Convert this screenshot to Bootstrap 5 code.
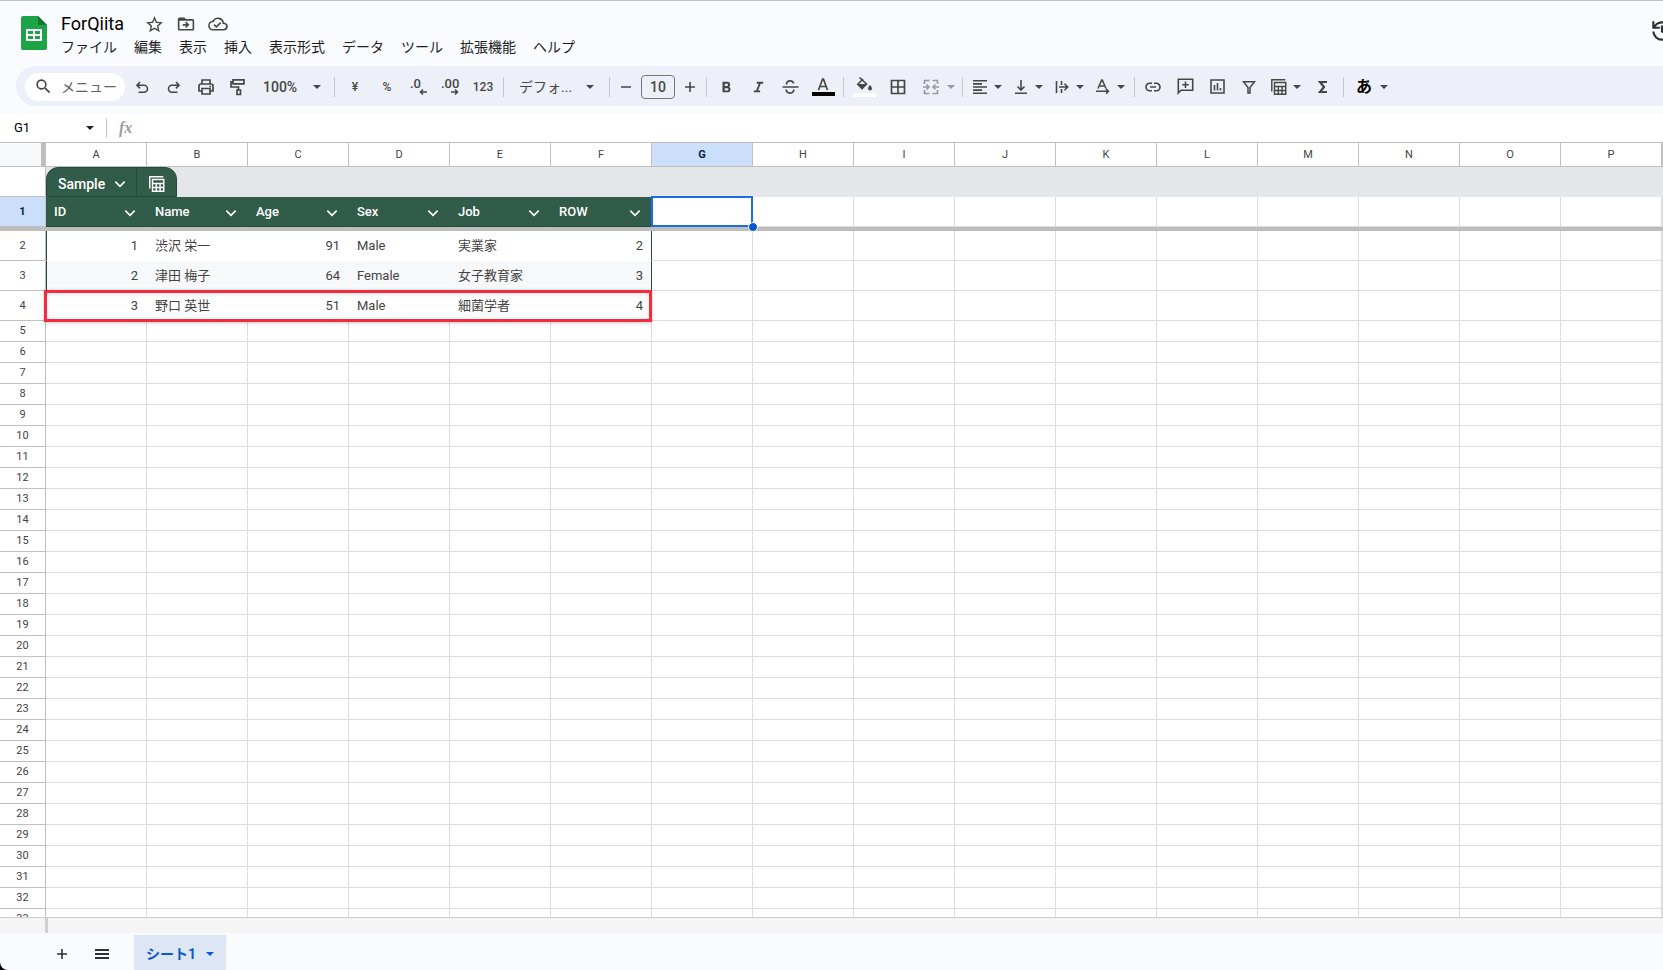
<!DOCTYPE html>
<html lang="ja">
<head>
<meta charset="utf-8">
<meta name="viewport" content="width=device-width, initial-scale=1">
<title>ForQiita</title>
<link href="https://cdn.jsdelivr.net/npm/bootstrap@5.3.0/dist/css/bootstrap.min.css" rel="stylesheet">
<style>
:root{--ink:#444746;--line:#dcdcdc;--head-line:#c0c0c0;--freeze:#bdbdbd;--green:#315c4a;--green-dark:#244a39;--blue:#0b57d0}
html{background:#000}
body{background:transparent;font-family:Roboto,"Noto Sans CJK JP",sans-serif;font-size:14px;line-height:20px;color:#1f1f1f}
button{background:none;border:0;padding:0;color:inherit}
svg{display:block;fill:currentColor;flex:none}
.app{background:#f9fbff;border-top:1px solid #c0c0c0;border-bottom-left-radius:8px}
.app-head{height:65px;padding:11px 0 0 21px;gap:14px}
.doc-title{font-size:18px;line-height:24px;color:#000;width:80px;border:0;padding:0;background:none}
.menus{gap:17px;padding-top:1px}
.menus a{color:#1f1f1f;text-decoration:none}
.head-icons{gap:12px;color:var(--ink)}
.history{margin-right:-12px;height:38px;color:#303030}
.tools{height:40px;margin-left:16px;padding:1px 0 0 9px;background:#edf0f8;border-radius:20px 0 0 20px;color:var(--ink)}
.search-pill{width:100px;height:28px;border-radius:14px;background:#fff;padding-left:9px;gap:8px;margin-right:1px}
.search-pill input{width:60px;border:0;padding:0;background:none;outline:0}
.search-pill input::placeholder{color:#5f6368;opacity:1}
.tool{width:32px;height:28px;display:flex;align-items:center;justify-content:center;flex:none}
.tool.slim{width:24px}
.split{width:1px;height:20px;margin:0 4px;background:#c4c7cc;flex:none}
.split.tight{margin-right:2px}
.drop{height:28px;display:flex;align-items:center;flex:none;padding-left:1px;width:40px}
.drop .glyph{width:24px;display:flex;justify-content:center}
.drop.wide{width:44px;padding-left:5px;gap:2px}
.drop.kana{width:46px;padding-left:4px;gap:2px;color:#000}
.drop.kana .tri{color:var(--ink)}
.drop.tbl{width:42px;padding-left:2px}
.drop.zoom{width:76px;padding:0 7px 0 9px;justify-content:space-between}
.drop.face{width:97px;padding:0 9px 0 11px;justify-content:space-between}
.tri{width:12px;display:flex;justify-content:center;flex:none}
.tri::before{content:"";border:4px solid transparent;border-top-color:currentColor;border-bottom:0}
.num-fmt{font-size:14px;font-weight:500}
.small-fmt{font-size:12px;font-weight:500}
.size-box{width:34px;height:24px;margin:0 3px;border:1px solid #747775;border-radius:4px;background:none;text-align:center;padding:0;color:var(--ink);font-weight:500}
.swatch{display:flex;flex-direction:column;align-items:center;gap:1px}
.swatch i{width:23px;height:4px}
.formula{height:28px;margin-top:8px;background:#fff}
.formula .cell-name{width:70px;border:0;padding:0;margin-left:14px;font-size:13px;color:#000}
.formula input:last-child{border:0;outline:0}
.fx{font:italic bold 16px/20px "Liberation Serif",serif;color:#9a9da1}
.sheet{flex:1 1 0;overflow:hidden;background:#fff;border-top:1px solid var(--head-line);border-bottom:1px solid #ccc;min-height:0}
.grid{table-layout:fixed;width:100%;border-collapse:separate;border-spacing:0;font-size:13px;color:#434343}
.grid th,.grid td{padding:0;height:21px;line-height:20px;border-right:1px solid var(--line);border-bottom:1px solid var(--line);font-weight:400;white-space:nowrap}
.grid .c-head{width:46px}.grid .c-data{width:101px}
.grid thead th{height:24px;line-height:23px;font-size:11px;text-align:center;border-color:var(--head-line)}
.grid tbody th{font-size:11px;text-align:center;border-color:var(--head-line)}
.grid .corner{background:#f8f9fa;box-shadow:inset -4px 0 var(--freeze)}
.grid .on{background:#cbdffb;font-weight:700!important;color:#041e49}
.grid .tall th,.grid .tall td{height:30px}
.grid .tall td{padding:0 8px}
.grid .banner td{background:#e5e6ea;border:0;padding:0;vertical-align:top}
.tabset{width:131px;height:30px;background:var(--green);color:#fff;border-radius:12px 12px 0 0;border:1px solid var(--green-dark)}
.tabset button:first-child{width:90px;padding:3px 9px 0 11px;border-right:1px solid var(--green-dark);font-weight:500;font-size:14px}
.tabset button:last-child{width:39px;padding-top:3px}
.grid .titles td.h{background:var(--green);border-color:var(--green);border-bottom-color:var(--green-dark);color:#fff;font-weight:500;padding-right:9px}
.grid .rec td.f{border-color:transparent}
.grid .rec td.n{text-align:right}
.grid .rec td.first{border-left:1px solid var(--green-dark)}
.grid .rec td.last{border-right:1px solid var(--green-dark)}
.grid .band td.f{background:#f6f8f9}
.grid .freeze td{height:4px;line-height:0;background:var(--freeze);border:0}
.picked,.flagged{position:relative}
.picked::before{content:"";position:absolute;left:-1px;top:-1px;right:-1px;bottom:-1px;border:2px solid #1a6ee0;z-index:2}
.picked::after{content:"";position:absolute;right:-6px;bottom:-6px;width:10px;height:10px;border-radius:50%;background:var(--blue);border:1px solid #fff;z-index:3}
.flagged::after{content:"";position:absolute;left:-3px;top:-1px;width:608px;height:32px;border:3px solid #f52b3d;box-shadow:0 1px 4px #0003,inset 0 1px 4px #0002;z-index:2}
.scroll-lane{height:15px;background:#f5f5f5;padding-left:45px}
.scroll-lane i{width:3px;background:#d0d0d0}
.foot{height:37px;padding:2px 0 0 46px;color:#303030}
.foot .sheet-tab{width:92px;background:#dde6f5;color:var(--blue);font-weight:700;padding:2px 0 0 12px;gap:8px;margin-left:16px}
.foot .tool{padding-top:2px}
</style>
</head>
<body>
<svg class="d-none">
  <symbol id="chev" viewBox="0 0 12 12"><path d="M2 4l4 4 4-4" fill="none" stroke="currentColor" stroke-width="1.400"/></symbol>
  <symbol id="tcalc" viewBox="0 0 20 20"><path d="M2 15V2h15M5 5h12.500v13H5zM5 9.500h12.500M5 13.800h12.500M9.200 9.500V18M13.400 9.500V18" fill="none" stroke="currentColor" stroke-width="1.600"/></symbol>
</svg>
<div class="app d-flex flex-column vh-100 overflow-hidden">
  <header class="app-head d-flex flex-shrink-0">
    <svg width="26" height="34" viewBox="0 0 26 34" class="mt-1"><path fill="#1ca446" d="M2 0H17l9 9v23a2 2 0 0 1-2 2H2a2 2 0 0 1-2-2V2a2 2 0 0 1 2-2z"/><path fill="#0f7a34" d="M17 0l9 9h-9z"/><path fill="#fff" d="M5 13h16v12H5zM7 15v3h5v-3zm7 0v3h5v-3zM7 20v3h5v-3zm7 0v3h5v-3z" fill-rule="evenodd"/></svg>
    <div>
      <div class="d-flex align-items-center">
        <input class="doc-title" aria-label="タイトル" value="ForQiita">
        <div class="head-icons d-flex ms-1">
          <button aria-label="スター"><svg width="19" height="17" viewBox="1 2 22 20"><path d="M22 9.240l-7.190-.62L12 2 9.190 8.630 2 9.240l5.460 4.730L5.820 21 12 17.270 18.180 21l-1.630-7.030zM12 15.400l-3.760 2.270 1-4.280-3.320-2.880 4.380-.38L12 6.100l1.710 4.040 4.380.38-3.320 2.880 1 4.280z"/></svg></button>
          <button aria-label="移動"><svg width="20" height="18" viewBox="0 0 24 22"><path d="M20 5h-8l-2-2H4a2 2 0 0 0-2 2v12c0 1.100.9 2 2 2h16a2 2 0 0 0 2-2V7a2 2 0 0 0-2-2zm0 12H4V7h16zM12.200 16l4-4-4-4-1.300 1.300L12.500 11H8v2h4.500l-1.600 1.700z"/></svg></button>
          <button aria-label="保存済み"><svg width="20" height="18" viewBox="0 1 24 22"><path d="M19.350 10.040A7.490 7.490 0 0 0 12 4C9.110 4 6.600 5.640 5.350 8.040A5.990 5.990 0 0 0 0 14c0 3.310 2.690 6 6 6h13c2.760 0 5-2.240 5-5 0-2.640-2.050-4.780-4.650-4.960zM19 18H6a4 4 0 0 1-.4-8l1.070-.11.500-.95a5.500 5.500 0 0 1 10.220 1.490l.3 1.500 1.530.11A3 3 0 0 1 19 18zm-9-3.800-2.100-2.100-1.400 1.400L10 17l6-6-1.400-1.400z"/></svg></button>
        </div>
      </div>
      <nav class="menus d-flex"><a href="#">ファイル</a><a href="#">編集</a><a href="#">表示</a><a href="#">挿入</a><a href="#">表示形式</a><a href="#">データ</a><a href="#">ツール</a><a href="#">拡張機能</a><a href="#">ヘルプ</a></nav>
    </div>
    <button class="history ms-auto" aria-label="変更履歴"><svg width="26" height="26" viewBox="0 0 24 24"><path d="M12 3a9 9 0 0 0-7 3.400V3H3v7h7V8H6.200A7 7 0 0 1 12 5a7 7 0 1 1-7 7.500H3A9 9 0 1 0 12 3zm-1 4v6l5 3 1-1.600-4-2.400V7z"/></svg></button>
  </header>

  <div class="tools d-flex align-items-center flex-shrink-0">
    <label class="search-pill d-flex align-items-center flex-shrink-0"><svg width="19" height="19" viewBox="0 0 24 24"><path d="M15.500 14h-.8l-.3-.3A6.500 6.500 0 1 0 13.700 14.400l.3.300v.8l5 5 1.500-1.500zm-6 0a4.500 4.500 0 1 1 0-9 4.500 4.500 0 0 1 0 9z"/></svg><input placeholder="メニュー" aria-label="メニュー"></label>
    <button class="tool" aria-label="元に戻す"><svg width="16" height="16" viewBox="0 0 16 16"><path d="M6 3 3 6.200 6 9.400M3 6.200h7a3.500 3.500 0 0 1 0 7H4.500" fill="none" stroke="currentColor" stroke-width="1.600"/></svg></button>
    <button class="tool" aria-label="やり直し"><svg width="16" height="16" viewBox="0 0 16 16"><path d="m10 3 3 3.200-3 3.200M13 6.200H6a3.500 3.500 0 0 0 0 7h5.500" fill="none" stroke="currentColor" stroke-width="1.600"/></svg></button>
    <button class="tool" aria-label="印刷"><svg width="18" height="18" viewBox="0 0 18 18"><path d="M5 5.500V2h8v3.500M5 13H2V8a2 2 0 0 1 2-2h10a2 2 0 0 1 2 2v5h-3M5 10.500h8V16H5z" fill="none" stroke="currentColor" stroke-width="1.700"/><circle cx="13.200" cy="8.500" r=".9"/></svg></button>
    <button class="tool" aria-label="書式を貼り付け"><svg width="18" height="18" viewBox="0 0 18 18"><path d="M4 1.800h11v4H4zM4 3.800H2V9h7.500v3M8 12h3.500v4.500H8z" fill="none" stroke="currentColor" stroke-width="1.700"/></svg></button>
    <button class="drop zoom"><span class="num-fmt">100%</span><span class="tri"></span></button>
    <span class="split"></span>
    <button class="tool small-fmt">¥</button>
    <button class="tool small-fmt">%</button>
    <button class="tool num-fmt" aria-label="小数点以下の桁数を減らす"><svg width="18" height="20" viewBox="0 0 18 20"><text x="0" y="11" font-size="13">.0</text><path d="M17 15h-6M13 12.500 10.500 15l2.500 2.500" fill="none" stroke="currentColor" stroke-width="1.600"/></svg></button>
    <button class="tool num-fmt" aria-label="小数点以下の桁数を増やす"><svg width="18" height="20" viewBox="0 0 18 20"><text x="-1" y="11" font-size="13">.00</text><path d="M9 15h6M13 12.500l2.500 2.500-2.500 2.500" fill="none" stroke="currentColor" stroke-width="1.600"/></svg></button>
    <button class="tool small-fmt">123</button>
    <span class="split"></span>
    <button class="drop face"><span>デフォ...</span><span class="tri"></span></button>
    <span class="split"></span>
    <button class="tool slim" aria-label="縮小"><svg width="12" height="12"><path d="M1 5.200h10v1.600H1z"/></svg></button>
    <input class="size-box" aria-label="フォントサイズ" value="10">
    <button class="tool slim" aria-label="拡大"><svg width="12" height="12"><path d="M1 5.200h10v1.600H1zM5.200 1h1.600v10H5.200z"/></svg></button>
    <span class="split"></span>
    <button class="tool" aria-label="太字"><svg width="18" height="18" viewBox="1 0 24 24"><path d="M15.600 11.800c1-.7 1.600-1.800 1.600-2.800a4 4 0 0 0-4-4H7v14h7c2.100 0 3.700-1.700 3.700-3.800 0-1.500-.9-2.800-2.100-3.400zM10 7.500h3a1.500 1.500 0 0 1 0 3h-3zm3.500 9H10v-3h3.500a1.500 1.500 0 0 1 0 3z"/></svg></button>
    <button class="tool" aria-label="斜体"><svg width="18" height="18" viewBox="1 0 24 24"><path d="M10 5v2.500h2.600l-3.400 9H6V19h8.500v-2.500h-2.700l3.400-9H18.500V5z"/></svg></button>
    <button class="tool" aria-label="取り消し線"><svg width="18" height="18" viewBox="1 0 18 18"><path d="M1.500 9h16M5.500 6.500C5 1.800 12.500 1.800 12.500 5.500M5.200 11.500c.3 5 8 4.500 7.600 0" fill="none" stroke="currentColor" stroke-width="1.700"/></svg></button>
    <button class="tool" aria-label="文字色"><span class="swatch"><svg width="12" height="13" viewBox="0 0 12 13"><path d="M1.500 12 5.600 1h.8l4.100 11M3 8.500h6" fill="none" stroke="currentColor" stroke-width="1.700"/></svg><i class="bg-black"></i></span></button>
    <span class="split"></span>
    <button class="tool" aria-label="塗りつぶし"><span class="swatch"><svg width="17" height="16" viewBox="0 0 17 16"><path d="M3.500 1.500 10.500 8 6 12.500 1.800 8.300 7 3" fill="none" stroke="currentColor" stroke-width="1.600"/><path d="M2 8h9l-5 5zM14 9s2 2.200 2 3.500a2 2 0 0 1-4 0C12 11.200 14 9 14 9z"/></svg><i class="bg-white"></i></span></button>
    <button class="tool" style="margin-left:2px" aria-label="枠線"><svg width="16" height="16"><path d="M1.500 1.500h13v13h-13zM8 1.500v13M1.500 8h13" fill="none" stroke="currentColor" stroke-width="1.700"/></svg></button>
    <button class="drop wide opacity-50" disabled aria-label="セルを結合"><span class="glyph"><svg width="16" height="16" viewBox="0 0 16 16"><path d="M6.500 1.500h-5V5M9.500 1.500h5V5M6.500 14.500h-5V11M9.500 14.500h5V11M0 8h5.500M16 8h-5.500M3.500 5.500 6 8l-2.500 2.500M12.500 5.500 10 8l2.500 2.500" fill="none" stroke="currentColor" stroke-width="1.600"/></svg></span><span class="tri"></span></button>
    <span class="split"></span>
    <div class="d-flex" style="gap:1px">
      <button class="drop" aria-label="水平方向の配置"><span class="glyph"><svg width="14" height="14"><path d="M0 0h14v1.600H0zM0 3.100h9v1.600H0zM0 6.200h14v1.600H0zM0 9.300h9v1.600H0zM0 12.400h14V14H0z"/></svg></span><span class="tri"></span></button>
      <button class="drop" aria-label="垂直方向の配置"><span class="glyph"><svg width="14" height="14"><path d="M7 0v9.500M3.500 6.500 7 10l3.500-3.500M1 13.200h12" fill="none" stroke="currentColor" stroke-width="1.600"/></svg></span><span class="tri"></span></button>
      <button class="drop" aria-label="折り返し"><span class="glyph"><svg width="14" height="14"><path d="M1.500 1v12M6.500 1v4M6.500 9v4M4 7h8.500M9.500 3.800 12.700 7 9.500 10.200" fill="none" stroke="currentColor" stroke-width="1.600"/></svg></span><span class="tri"></span></button>
      <button class="drop" aria-label="回転"><span class="glyph"><svg width="14" height="15"><path d="M2 9.500 5.700 1h.6L10 9.500M3.300 7h5.400M0 12.300h12M10 9.800l2.500 2.500L10 14.800" fill="none" stroke="currentColor" stroke-width="1.500"/></svg></span><span class="tri"></span></button>
    </div>
    <span class="split tight"></span>
    <button class="tool" aria-label="リンク"><svg width="16" height="10"><path d="M7 1.300H4.700a3.700 3.700 0 0 0 0 7.400H7M9 1.300h2.300a3.700 3.700 0 0 1 0 7.400H9M5 5h6" fill="none" stroke="currentColor" stroke-width="1.600"/></svg></button>
    <button class="tool" aria-label="コメント"><svg width="17" height="17"><path d="M1.300 15V1.300h14.400v11H4zM8.500 3.500v6.500M5.200 6.800h6.600" fill="none" stroke="currentColor" stroke-width="1.600"/></svg></button>
    <button class="tool" aria-label="グラフ"><svg width="15" height="15"><path d="M1 1h13v13H1zM4.500 6v5.500M7.500 4v7.500M10.500 9v2.500" fill="none" stroke="currentColor" stroke-width="1.600"/></svg></button>
    <button class="tool" aria-label="フィルタ"><svg width="14" height="14"><path d="M1.500 1.800h11L8 7.500V13H6V7.500z" fill="none" stroke="currentColor" stroke-width="1.500"/></svg></button>
    <button class="drop tbl" aria-label="テーブル"><span class="glyph"><svg width="18" height="18"><use href="#tcalc"/></svg></span><span class="tri"></span></button>
    <button class="tool" aria-label="関数"><svg width="12" height="14"><path d="M10 2H3l4 5-4 5h7" fill="none" stroke="currentColor" stroke-width="2.200"/></svg></button>
    <span class="split"></span>
    <button class="drop kana"><span class="glyph fw-bold fs-6">あ</span><span class="tri"></span></button>
  </div>

  <div class="formula d-flex align-items-center flex-shrink-0">
    <input class="cell-name" aria-label="セル範囲" value="G1"><span class="tri"></span>
    <span class="split" style="margin:0 12px 0 10px"></span><label class="fx" for="fxIn">fx</label>
    <input id="fxIn" class="flex-fill">
  </div>

  <main class="sheet">
    <table class="grid">
      <colgroup><col class="c-head"><col class="c-data" span="16"><col></colgroup>
      <thead><tr><th class="corner"></th><th>A</th><th>B</th><th>C</th><th>D</th><th>E</th><th>F</th><th class="on">G</th><th>H</th><th>I</th><th>J</th><th>K</th><th>L</th><th>M</th><th>N</th><th>O</th><th>P</th><th></th></tr></thead>
      <tbody id="rows">
        <tr class="tall banner"><th></th><td colspan="17"><div class="tabset d-flex"><button class="d-flex align-items-center justify-content-between">Sample<svg width="14" height="14"><use href="#chev"/></svg></button><button class="d-flex align-items-center justify-content-center" aria-label="テーブル"><svg width="18" height="18"><use href="#tcalc"/></svg></button></div></td></tr>
      </tbody>
    </table>
  </main>
  <div class="scroll-lane d-flex flex-shrink-0"><i></i></div>
  <footer class="foot d-flex flex-shrink-0">
    <button class="tool h-100" aria-label="シートを追加"><svg width="12" height="12"><path d="M1 5.200h10v1.600H1zM5.200 1h1.600v10H5.200z"/></svg></button>
    <button class="tool h-100 ms-2" aria-label="すべてのシート"><svg width="14" height="10"><path d="M0 0h14v2H0zM0 4h14v2H0zM0 8h14v2H0z"/></svg></button>
    <button class="sheet-tab d-flex align-items-center">シート1<span class="tri"></span></button>
  </footer>
</div>
<script>
const chev = '<svg width="14" height="14" style="margin-top:2px"><use href="#chev"/></svg>';
const blanks = n => '<td></td>'.repeat(n);
const titles = ['ID', 'Name', 'Age', 'Sex', 'Job', 'ROW'];
const people = [
  [1, '渋沢 栄一', 91, 'Male', '実業家', 2],
  [2, '津田 梅子', 64, 'Female', '女子教育家', 3],
  [3, '野口 英世', 51, 'Male', '細菌学者', 4]
];
let html = '<tr class="tall titles"><th class="on">1</th>' +
  titles.map(t => `<td class="h"><div class="d-flex align-items-center justify-content-between">${t}${chev}</div></td>`).join('') +
  '<td class="picked"></td>' + blanks(10) + '</tr><tr class="freeze"><td colspan="18"></td></tr>';
people.forEach((p, i) => {
  html += `<tr class="tall rec${i === 1 ? ' band' : ''}"><th>${i + 2}</th>` + p.map((v, c) => {
    const k = ['f'];
    if (typeof v === 'number') k.push('n');
    if (c === 0) k.push('first');
    if (c === 5) k.push('last');
    if (c === 0 && i === 2) k.push('flagged');
    return `<td class="${k.join(' ')}">${v}</td>`;
  }).join('') + blanks(11) + '</tr>';
});
for (let r = 5; r <= 33; r++) html += `<tr><th>${r}</th>${blanks(17)}</tr>`;
document.getElementById('rows').insertAdjacentHTML('beforeend', html);
</script>
<script src="https://cdn.jsdelivr.net/npm/bootstrap@5.3.0/dist/js/bootstrap.bundle.min.js"></script>
</body>
</html>
